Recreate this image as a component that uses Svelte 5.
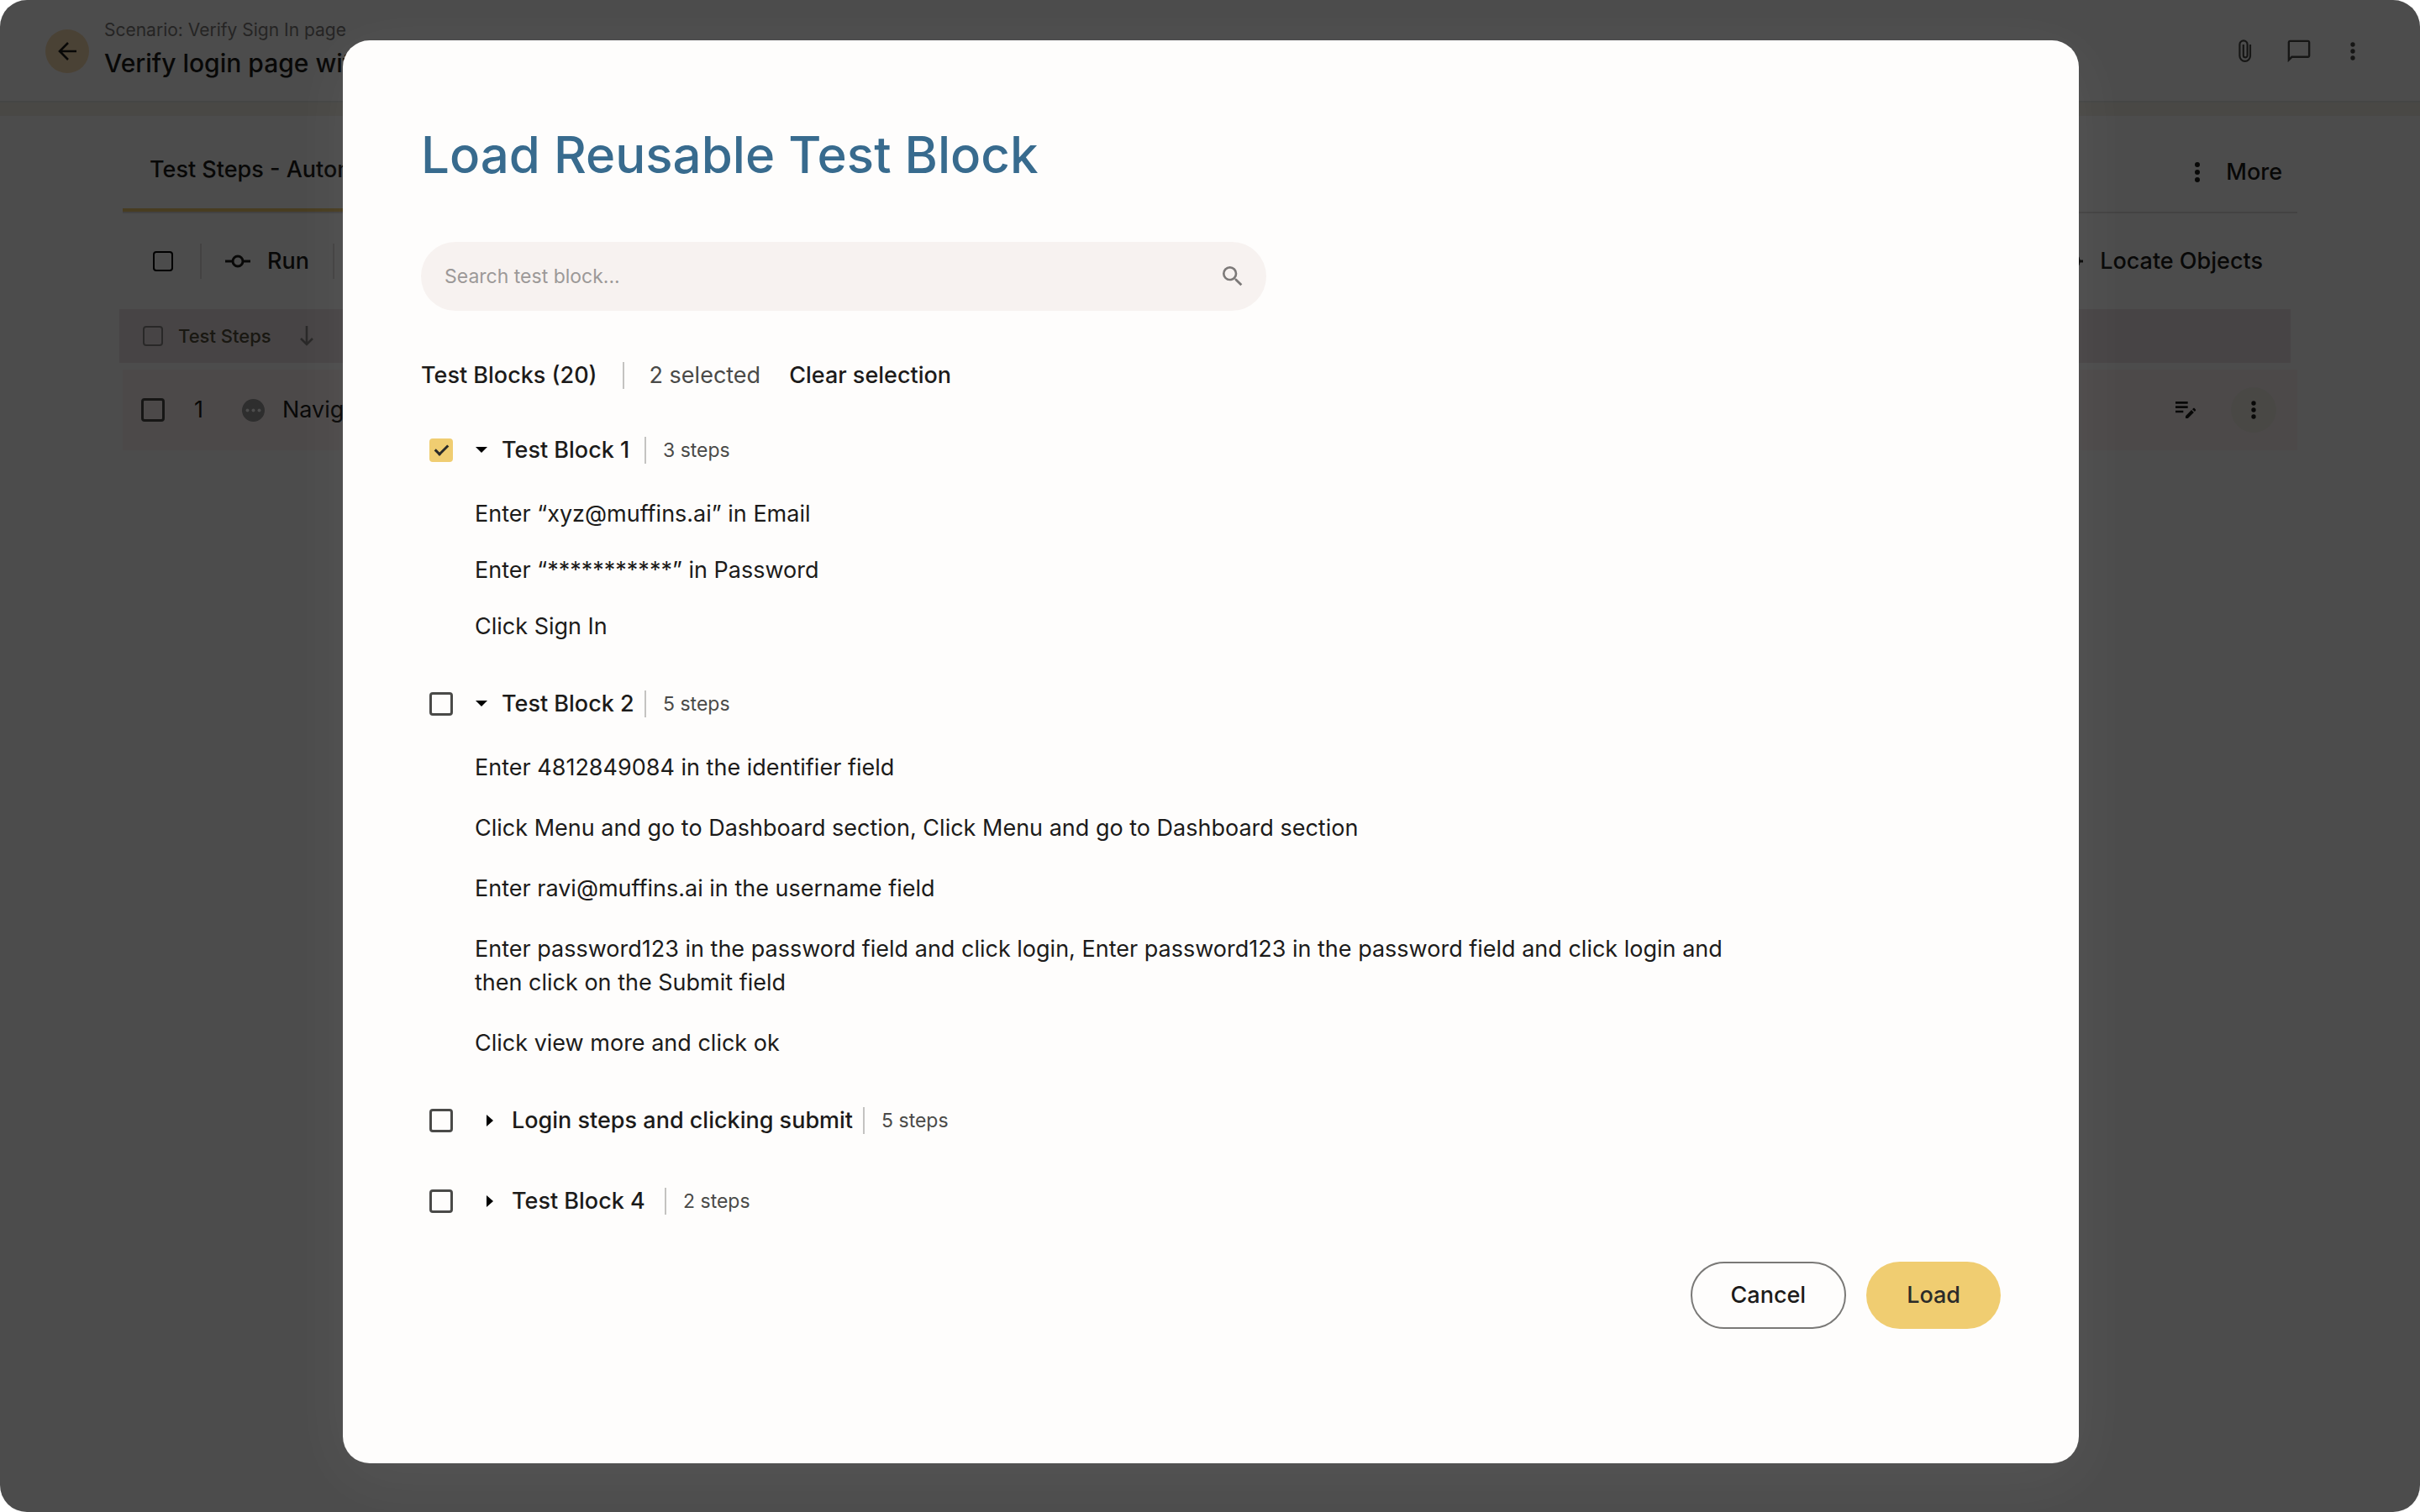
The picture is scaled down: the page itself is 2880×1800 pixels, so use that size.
<script>
	let search = $state('');

	let blocks = $state([
		{
			name: 'Test Block 1',
			count: 3,
			checked: true,
			open: true,
			compact: true,
			steps: ['Enter “xyz@muffins.ai” in Email', 'Enter “***********” in Password', 'Click Sign In']
		},
		{
			name: 'Test Block 2',
			count: 5,
			checked: false,
			open: true,
			compact: false,
			steps: [
				'Enter 4812849084 in the identifier field',
				'Click Menu and go to Dashboard section, Click Menu and go to Dashboard section',
				'Enter ravi@muffins.ai in the username field',
				'Enter password123 in the password field and click login, Enter password123 in the password field and click login and then click on the Submit field',
				'Click view more and click ok'
			]
		},
		{ name: 'Login steps and clicking submit', count: 5, checked: false, open: false, steps: [] },
		{ name: 'Test Block 4', count: 2, checked: false, open: false, steps: [] }
	]);

	function clearSelection() {
		for (const block of blocks) block.checked = false;
	}
</script>

{#snippet dots(size)}
	<svg width={size} height={size} viewBox="0 0 24 24" fill="currentColor" aria-hidden="true">
		<circle cx="12" cy="6" r="2" />
		<circle cx="12" cy="12" r="2" />
		<circle cx="12" cy="18" r="2" />
	</svg>
{/snippet}

<div class="screen">
	<div class="page">
		<header class="page-header">
			<button class="back" type="button" aria-label="Back">
				<svg width="22" height="22" viewBox="0 0 22 22" fill="none" stroke="currentColor" stroke-width="2.6" aria-hidden="true">
					<path d="M22 11H2M12 1L2 11l10 10" />
				</svg>
			</button>
			<div class="heading">
				<div class="scenario">Scenario: Verify Sign In page</div>
				<div class="case-name">Verify login page with valid credentials</div>
			</div>
			<div class="header-actions">
				<button class="icon-btn" type="button" aria-label="Attachments">
					<svg width="16" height="28" viewBox="0 0 16 28" fill="none" stroke="currentColor" stroke-width="2.2" aria-hidden="true">
						<path d="M14 6v13.5a6.3 6.3 0 0 1-12.6 0V6a4.6 4.6 0 0 1 9.2 0v13a2.4 2.4 0 0 1-4.8 0V6" />
					</svg>
				</button>
				<button class="icon-btn" type="button" aria-label="Comments">
					<svg width="32" height="32" viewBox="0 0 24 24" fill="currentColor" aria-hidden="true">
						<path d="M20 2H4c-1.1 0-2 .9-2 2v18l4-4h14c1.1 0 2-.9 2-2V4c0-1.1-.9-2-2-2zm.2 14.2H5.2l-1.4 1.4V3.8h16.4v12.4z" />
					</svg>
				</button>
				<button class="icon-btn" type="button" aria-label="More options">{@render dots(32)}</button>
			</div>
		</header>
		<div class="strip"></div>

		<main class="content">
			<div class="tabs">
				<button class="tab" type="button">Test Steps - Automated</button>
				<button class="more" type="button">{@render dots(36)} More</button>
			</div>

			<div class="toolbar">
				<span class="check-cell"><input class="check dark" type="checkbox" aria-label="Select all" /></span>
				<span class="tool-divider"></span>
				<button class="tool" type="button">
					<svg width="30" height="30" viewBox="0 0 30 30" fill="none" stroke="currentColor" stroke-width="3" aria-hidden="true">
						<circle cx="15" cy="15" r="6" />
						<path d="M0 15h9M21 15h9" />
					</svg>
					Run
				</button>
				<span class="tool-divider"></span>
				<button class="tool last" type="button">
					<svg width="30" height="30" viewBox="0 0 30 30" fill="none" stroke="currentColor" stroke-width="3" aria-hidden="true">
						<circle cx="15" cy="15" r="10" />
						<path d="M0 15h5M25 15h5M15 0v5M15 25v5" />
					</svg>
					Locate Objects
				</button>
			</div>

			<div class="list-head">
				<input class="check faded" type="checkbox" aria-label="Select all test steps" />
				<span>Test Steps</span>
				<svg width="24" height="24" viewBox="0 0 24 24" fill="none" stroke="currentColor" stroke-width="2.6" aria-hidden="true">
					<path d="M12 0v22M5 15l7 7 7-7" />
				</svg>
			</div>

			<div class="step-row">
				<input class="check" type="checkbox" aria-label="Select step 1" />
				<span class="number">1</span>
				<svg width="27" height="27" viewBox="0 0 27 27" aria-hidden="true">
					<circle cx="13.5" cy="13.5" r="13.5" fill="#999999" />
					<circle cx="6.5" cy="13.5" r="2" fill="#ffffff" />
					<circle cx="13.5" cy="13.5" r="2" fill="#ffffff" />
					<circle cx="20.5" cy="13.5" r="2" fill="#ffffff" />
				</svg>
				<span class="step-text">Navigate to the login page</span>
				<button class="edit" type="button" aria-label="Edit step">
					<svg width="32" height="32" viewBox="0 1.5 24 24" fill="currentColor" aria-hidden="true">
						<path d="M3 10h11v2H3v-2zm0-2h11V6H3v2zm0 8h7v-2H3v2zm15.01-3.13.71-.71c.39-.39 1.02-.39 1.41 0l.71.71c.39.39.39 1.02 0 1.41l-.71.71-2.12-2.12zm-.71.71-5.3 5.3V21h2.12l5.3-5.3-2.12-2.12z" />
					</svg>
				</button>
				<button class="round" type="button" aria-label="Step options">{@render dots(32)}</button>
			</div>
		</main>
	</div>

	<div class="overlay">
		<div class="dialog" role="dialog" aria-modal="true" aria-labelledby="dialog-title">
			<h1 id="dialog-title">Load Reusable Test Block</h1>

			<label class="search">
				<input type="text" placeholder="Search test block..." aria-label="Search test block" bind:value={search} />
				<svg width="32" height="32" viewBox="0 0 24 24" fill="currentColor" aria-hidden="true">
					<path d="M15.5 14h-.79l-.28-.27A6.47 6.47 0 0 0 16 9.5 6.5 6.5 0 1 0 9.5 16c1.61 0 3.09-.59 4.23-1.57l.27.28v.79l5 4.99L20.49 19l-4.99-5zm-6 0C7.01 14 5 11.99 5 9.5S7.01 5 9.5 5 14 7.01 14 9.5 11.99 14 9.5 14z" />
				</svg>
			</label>

			<div class="summary">
				<span class="strong">Test Blocks (20)</span>
				<span class="divider"></span>
				<span class="muted">2 selected</span>
				<button class="clear" type="button" onclick={clearSelection}>Clear selection</button>
			</div>

			<div class="blocks">
				{#each blocks as block}
					<section>
						<div class="block-head" class:closed={!block.open}>
							<span class="box"><input class="check" type="checkbox" aria-label={block.name} bind:checked={block.checked} /></span>
							<button class="toggle" type="button" aria-expanded={block.open} onclick={() => (block.open = !block.open)}>
								<svg width="48" height="48" viewBox="0 0 48 48" fill="#000000" aria-hidden="true">
									{#if block.open}
										<path d="M17 20h14l-7 7z" />
									{:else}
										<path d="M18 17l8 7-8 7z" />
									{/if}
								</svg>
								<span class="name">{block.name}</span>
							</button>
							<span class="divider"></span>
							<span class="count">{block.count} steps</span>
						</div>
						{#if block.open}
							<ul class="steps" class:compact={block.compact}>
								{#each block.steps as step}
									<li>{step}</li>
								{/each}
							</ul>
						{/if}
					</section>
				{/each}
			</div>

			<div class="actions">
				<button class="btn outline" type="button">Cancel</button>
				<button class="btn primary" type="button">Load</button>
			</div>
		</div>
	</div>
</div>

<style>
	:global(body) {
		background: #ffffff;
	}

	.screen {
		display: grid;
		min-height: 100vh;
		border-radius: 32px;
		overflow: hidden;
		background: #ffffff;
		font-family: Inter, 'Liberation Sans', sans-serif;
		font-size: 27px;
		line-height: 40px;
		color: #1c1b1a;
	}

	.page,
	.overlay {
		grid-area: 1 / 1;
		min-width: 0;
	}

	button {
		display: flex;
		align-items: center;
		padding: 0;
		border: 0;
		background: none;
		color: inherit;
		font: inherit;
		cursor: pointer;
		white-space: nowrap;
	}

	svg {
		flex-shrink: 0;
	}

	.check {
		appearance: none;
		display: grid;
		place-items: center;
		flex-shrink: 0;
		width: 28px;
		height: 28px;
		margin: 0;
		border: 3px solid #4a4a48;
		border-radius: 4px;
	}

	.check:checked {
		border-color: #f0cd71;
		background: #f0cd71;
	}

	.check:checked::after {
		content: '';
		width: 6px;
		height: 13px;
		margin-bottom: 4px;
		border: solid #2b2b29;
		border-width: 0 3px 3px 0;
		transform: rotate(45deg);
	}

	.check.dark,
	.check.faded {
		width: 24px;
		height: 24px;
		border-width: 2px;
	}

	.check.dark {
		border-color: #000000;
	}

	.check.faded {
		border-color: #8a8886;
	}

	.page-header {
		display: flex;
		align-items: center;
		gap: 18px;
		padding: 22px 60px 20px 54px;
		border-bottom: 2px solid #e8e6e4;
	}

	.back {
		justify-content: center;
		width: 52px;
		height: 52px;
		border-radius: 50%;
		background: #f9dcb2;
	}

	.heading {
		flex: 1;
		font-weight: 500;
	}

	.scenario {
		font-size: 21px;
		font-weight: 400;
		line-height: 28px;
		color: #7d7b79;
	}

	.case-name {
		font-size: 30px;
		line-height: 50px;
	}

	.header-actions {
		display: flex;
		gap: 24px;
		color: #4a4a48;
	}

	.icon-btn {
		justify-content: center;
		width: 40px;
		height: 40px;
	}

	.strip {
		height: 16px;
		background: #f5f0e8;
	}

	.content {
		padding: 44px 146px 0;
	}

	.tabs {
		display: flex;
		align-items: flex-start;
		justify-content: space-between;
		border-bottom: 2px solid #e0dedc;
		font-weight: 500;
	}

	.tab {
		padding: 0 32px 26px;
		border-bottom: 4px solid #f0cd71;
	}

	.more {
		gap: 16px;
		padding: 3px 18px 0 0;
	}

	.toolbar {
		display: flex;
		align-items: center;
		gap: 28px;
		padding: 36px 41px 36px 32px;
		font-weight: 500;
	}

	.check-cell {
		display: flex;
		justify-content: center;
		width: 32px;
	}

	.tool {
		gap: 20px;
	}

	.tool.last {
		margin-left: auto;
	}

	.tool-divider {
		width: 2px;
		height: 42px;
		background: #e0dedc;
	}

	.list-head {
		display: flex;
		align-items: center;
		gap: 18px;
		height: 64px;
		margin: 0 8px 8px -4px;
		padding-left: 28px;
		background: #efe4e6;
		font-size: 22px;
		font-weight: 500;
		color: #55503c;
	}

	.list-head svg {
		margin-left: 12px;
		color: #8a8886;
	}

	.step-row {
		display: flex;
		align-items: center;
		height: 96px;
		padding: 0 25px 0 22px;
		background: #fff4f6;
	}

	.number {
		width: 57px;
		margin-left: 35px;
	}

	.step-text {
		flex: 1;
		margin-left: 21px;
	}

	.round {
		justify-content: center;
		width: 54px;
		height: 54px;
		margin-left: 38px;
		border-radius: 50%;
		background: #f4f1e8;
	}

	.overlay {
		padding: 48px 406px 58px 408px;
		background: rgba(0, 0, 0, 0.7);
	}

	.dialog {
		padding: 100px 93px 160px;
		border-radius: 32px;
		background: #fefdfc;
		box-shadow: 0 16px 80px rgba(255, 255, 255, 0.06);
	}

	h1 {
		margin: 0 0 68px;
		font-size: 60px;
		font-weight: 500;
		line-height: 72px;
		color: #386b8e;
	}

	.search {
		display: flex;
		align-items: center;
		gap: 16px;
		max-width: 1006px;
		height: 82px;
		padding: 0 24px 0 28px;
		border-radius: 41px;
		background: #f7f2f0;
		color: #7c7978;
		box-sizing: border-box;
	}

	.search input {
		flex: 1;
		min-width: 0;
		padding: 0;
		border: 0;
		outline: 0;
		background: none;
		color: #1c1b1a;
		font: inherit;
		font-size: 23px;
	}

	.search input::placeholder {
		color: #9c9998;
		opacity: 1;
	}

	.summary {
		display: flex;
		align-items: center;
		margin: 57px 0 45px;
	}

	.strong,
	.clear {
		font-weight: 500;
	}

	.clear {
		margin-left: 34px;
	}

	.muted {
		color: #4a4a48;
	}

	.divider {
		width: 2px;
		height: 32px;
		background: #c4c3c1;
	}

	.summary .divider {
		margin: 0 30px;
	}

	.blocks {
		display: flex;
		flex-direction: column;
		gap: 48px;
	}

	.block-head {
		display: flex;
		align-items: center;
	}

	.box {
		display: grid;
		place-items: center;
		width: 48px;
		height: 48px;
	}

	.name {
		min-width: 158px;
		font-weight: 500;
		text-align: left;
	}

	.closed .toggle {
		margin-left: 12px;
	}

	.closed .name {
		min-width: 170px;
	}

	.block-head .divider {
		margin: 0 20px 0 12px;
	}

	.count {
		font-size: 23px;
		color: #4a4a48;
	}

	.steps {
		display: flex;
		flex-direction: column;
		gap: 32px;
		max-width: 1540px;
		margin: 0;
		padding: 32px 0 0 64px;
		list-style: none;
	}

	.steps.compact {
		gap: 27px;
	}

	.actions {
		display: flex;
		justify-content: flex-end;
		gap: 24px;
		margin-top: 48px;
	}

	.btn {
		justify-content: center;
		height: 80px;
		padding: 0 48px;
		border-radius: 40px;
		font-weight: 500;
	}

	.outline {
		border: 2px solid #7a7977;
		padding: 0 46px;
	}

	.primary {
		background: #f0cd71;
		color: #2b2b29;
	}
</style>
